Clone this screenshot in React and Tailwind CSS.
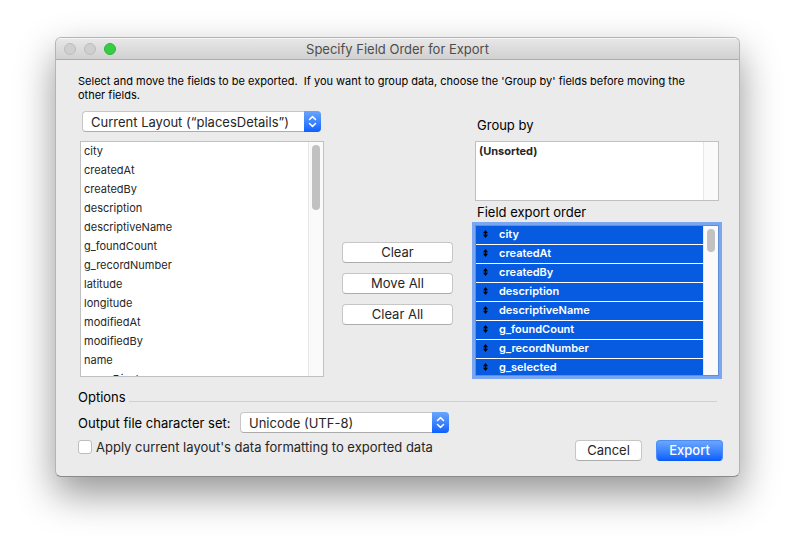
import React from "react";

const fields = [
  "city",
  "createdAt",
  "createdBy",
  "description",
  "descriptiveName",
  "g_foundCount",
  "g_recordNumber",
  "latitude",
  "longitude",
  "modifiedAt",
  "modifiedBy",
  "name",
  "nameDisplay",
];

const exportFields = [
  "city",
  "createdAt",
  "createdBy",
  "description",
  "descriptiveName",
  "g_foundCount",
  "g_recordNumber",
  "g_selected",
];

function PopUp({ id, label, value, className }) {
  return (
    <div className={`relative h-[21px] ${className}`}>
      <select
        id={id}
        aria-label={label}
        defaultValue={value}
        className="block h-full w-full appearance-none rounded-[4px] border border-[#c6c6c6] border-b-[#acacac] bg-white pt-0.5 pr-5 pl-2 text-[13px] leading-[17px] text-[#262626] outline-none"
      >
        <option>{value}</option>
      </select>
      <span className="pointer-events-none absolute inset-y-0 right-0 flex w-[17px] items-center justify-center rounded-r-[4px] bg-linear-to-b from-[#6aa5fb] to-[#0a60ff]">
        <svg width="9" height="13" viewBox="0 0 9 13" fill="none" stroke="white" strokeWidth="1.5" strokeLinecap="round" strokeLinejoin="round">
          <path d="M1.5 4.5 4.5 1.6 7.5 4.5M1.5 8.5 4.5 11.4 7.5 8.5" />
        </svg>
      </span>
    </div>
  );
}

function PushButton({ children, className }) {
  return (
    <button
      type="button"
      className={`h-[21px] rounded-[4px] border border-[#c6c6c6] border-b-[#acacac] bg-white text-[13px] leading-[19px] text-[#262626] ${className}`}
    >
      {children}
    </button>
  );
}

function Scrollbar({ thumb }) {
  return (
    <div className="w-[15px] shrink-0 border-l border-[#e7e7e7] bg-[#fafafa] pt-[3px] pl-[3px]">
      {thumb && <div className={`w-2 rounded-full bg-[#c1c1c1] ${thumb}`} />}
    </div>
  );
}

function SortHandle() {
  return (
    <svg className="shrink-0" width="5" height="8" viewBox="0 0 5 8" fill="black">
      <path d="M2.5 0 5 3.2H0ZM2.5 8 0 4.8H5ZM1.8 2h1.4v4H1.8Z" />
    </svg>
  );
}

export default function App() {
  return (
    <main className="min-h-screen bg-white px-[55px] py-[37px] font-['Inter','Liberation_Sans',sans-serif] text-[13px] text-black">
      <section
        aria-labelledby="title"
        className="overflow-hidden rounded-[6px] border border-[#b4b4b4] border-b-[#8a8a8a] bg-[#ebebeb] shadow-[0_17px_38px_rgba(0,0,0,0.42)]"
      >
        <header className="grid h-[22px] grid-cols-[1fr_auto_1fr] items-center border-b border-[#adadad] bg-linear-to-b from-[#e8e8e8] to-[#d1d1d1] px-2 shadow-[inset_0_1px_0_#f6f6f6]">
          <div className="flex gap-2">
            <button type="button" aria-label="Close" className="size-3 rounded-full border border-[#bcbcbc] bg-[#cfcfcf]" />
            <button type="button" aria-label="Minimize" className="size-3 rounded-full border border-[#bcbcbc] bg-[#cfcfcf]" />
            <button type="button" aria-label="Zoom" className="size-3 rounded-full border border-[#2db53a] bg-[#36cd43]" />
          </div>
          <h1 id="title" className="text-[13px] leading-5 text-[#4d4d4d]">
            Specify Field Order for Export
          </h1>
        </header>

        <div className="pt-[14px] pr-4 pb-[15px] pl-[22px]">
          <p className="pr-5 text-[11px] leading-[14px] whitespace-pre-wrap">
            {"Select and move the fields to be exported.  If you want to group data, choose the 'Group by' fields before moving the other fields."}
          </p>

          <div className="mt-[9px] grid grid-cols-[244px_1fr_244px] pr-1 pl-0.5">
            <div>
              <PopUp id="source" label="Field source" value="Current Layout (“placesDetails”)" className="mr-[3px] ml-0.5" />
              <div className="mt-[9px] flex h-[236px] overflow-hidden border border-[#c0c0c0] bg-white">
                <ul className="min-w-0 flex-1 text-[11px] leading-[18px] text-[#262626]">
                  {fields.map((f) => (
                    <li key={f} className="h-[19px] pl-[3px]">
                      {f}
                    </li>
                  ))}
                </ul>
                <Scrollbar thumb="h-[65px]" />
              </div>
            </div>

            <div className="flex flex-col gap-[10px] pt-[131px] pr-[22px] pl-[18px]">
              <PushButton>Clear</PushButton>
              <PushButton>Move All</PushButton>
              <PushButton>Clear All</PushButton>
            </div>

            <div>
              <h2 className="pt-1 pl-0.5 leading-5">Group by</h2>
              <div className="mt-1.5 flex h-[60px] border border-[#c0c0c0] bg-white">
                <p className="flex-1 pl-[3px] text-[11px] leading-[18px] font-bold text-[#262626]">(Unsorted)</p>
                <Scrollbar />
              </div>
              <h2 className="pt-px pl-0.5 leading-5">Field export order</h2>
              <div className="mt-[3px] flex h-[151px] overflow-hidden border border-[#5f8dd8] bg-white ring-3 ring-[#7ba6f0]">
                <ul className="min-w-0 flex-1 text-[11px] leading-4 font-semibold text-white">
                  {exportFields.map((f) => (
                    <li key={f} className="flex h-[19px] items-center gap-[11px] border-b border-white bg-[#065be0] pb-0.5 pl-[7px]">
                      <SortHandle />
                      <span>{f}</span>
                    </li>
                  ))}
                </ul>
                <Scrollbar thumb="h-[23px]" />
              </div>
            </div>
          </div>

          <div className="mt-[10px] mr-[6px] flex items-center gap-[3px]">
            <h2 className="leading-5">Options</h2>
            <hr className="mt-2 flex-1 border-[#cfcfcf]" />
          </div>

          <div className="mt-[5px] flex items-center">
            <label htmlFor="charset" className="w-[162px] pt-px leading-5">
              Output file character set:
            </label>
            <PopUp id="charset" value="Unicode (UTF-8)" className="w-[209px]" />
          </div>

          <div className="mt-[7px] flex items-start">
            <label className="flex flex-1 items-center gap-1 leading-[14px] text-[#262626]">
              <input
                type="checkbox"
                className="size-[14px] appearance-none rounded-[3px] border border-[#bdbdbd] bg-white"
              />
              Apply current layout's data formatting to exported data
            </label>
            <PushButton className="w-[67px]">Cancel</PushButton>
            <button
              type="submit"
              className="ml-[14px] h-[21px] w-[67px] rounded-[4px] border border-[#4a8df8] border-b-[#0a5cf5] bg-linear-to-b from-[#6ba6fb] to-[#0a60ff] text-[13px] leading-[19px] font-medium text-white"
            >
              Export
            </button>
          </div>
        </div>
      </section>
    </main>
  );
}
